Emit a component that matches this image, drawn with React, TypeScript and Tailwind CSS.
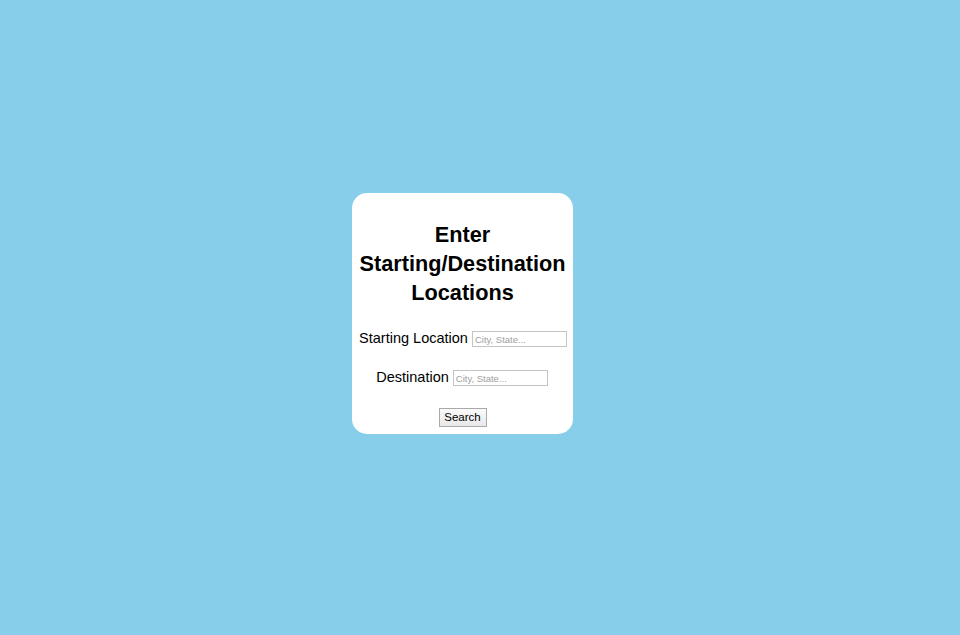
import React from 'react';

export default function App() {
  return (
    <div className="min-h-screen w-full bg-[#87ceeb] flex items-center justify-center pr-[35px] pb-[8px] font-['Liberation_Sans',Arial,sans-serif]">
      <div className="w-[221px] h-[241px] bg-white rounded-[15px] flex flex-col items-center pt-[27px]">
        <h2 className="text-[21.7px] leading-[29px] font-bold text-black text-center">
          Enter
          <br />
          Starting/Destination
          <br />
          Locations
        </h2>

        <div className="mt-[22px] h-[20px] flex items-center gap-[4px] pl-[1px]">
          <label className="text-[14.5px] text-black">Starting Location</label>
          <input
            type="text"
            placeholder="City, State..."
            className="w-[95px] h-[16px] border border-[#c4c4c4] px-[2px] text-[9.5px] placeholder:text-[#a0a0a0] outline-none"
          />
        </div>

        <div className="mt-[19px] h-[20px] flex items-center gap-[4px] pr-[1px]">
          <label className="text-[14.5px] text-black">Destination</label>
          <input
            type="text"
            placeholder="City, State..."
            className="w-[95px] h-[16px] border border-[#c4c4c4] px-[2px] text-[9.5px] placeholder:text-[#a0a0a0] outline-none"
          />
        </div>

        <button className="mt-[20px] w-[48px] h-[19px] bg-gradient-to-b from-[#fbfbfb] to-[#e8e8e8] border border-[#a9a9a9] text-[11.5px] text-black leading-none">
          Search
        </button>
      </div>
    </div>
  );
}
